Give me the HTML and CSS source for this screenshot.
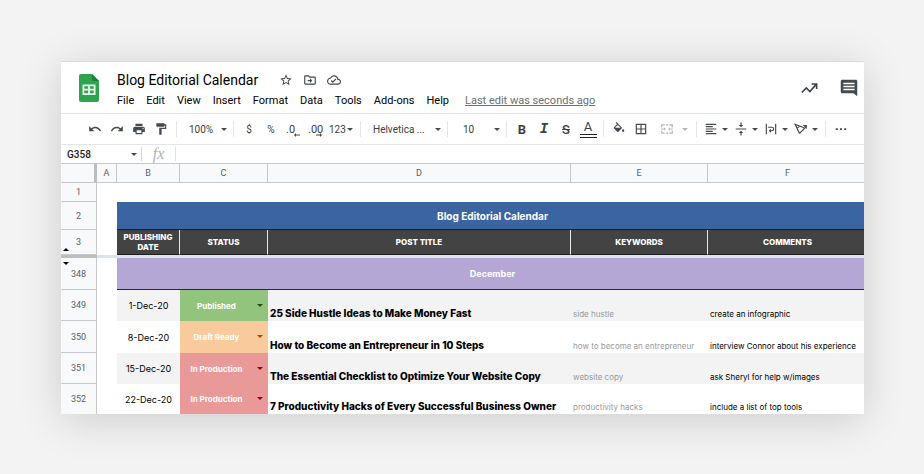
FILE: index.html
```
<!DOCTYPE html>
<html lang="en">
<head>
  <meta charset="UTF-8">
  <meta name="viewport" content="width=device-width, initial-scale=1.0">
  <title>Blog Editorial Calendar</title>
  <link rel="stylesheet" href="styles.css">
</head>
<body>
  <div class="window">
    <header class="header">
      <svg class="logo" viewBox="0 0 20 28">
        <path fill="#2ea44f" d="M2 0h11l7 7v19a2 2 0 0 1-2 2H2a2 2 0 0 1-2-2V2a2 2 0 0 1 2-2z"/>
        <path fill="#1d8040" d="M13 0l7 7h-7z"/>
        <path fill="#e9f7ec" fill-rule="evenodd" d="M3.500 10.500h13V21h-13zM5.300 12.200v2.600h3.800v-2.600zM10.900 12.200v2.600h3.800v-2.600zM5.300 16.600v2.600h3.800v-2.600zM10.900 16.600v2.600h3.800v-2.600z"/>
      </svg>
      <div class="doc">
        <div class="title-row">
          <h1>Blog Editorial Calendar</h1>
          <button class="icon-btn" aria-label="Star"><svg viewBox="0 0 24 24"><path d="M22 9.240l-7.190-.620L12 2 9.190 8.630 2 9.240l5.460 4.730L5.820 21 12 17.270 18.180 21l-1.630-7.030L22 9.240zM12 15.400l-3.760 2.270 1-4.280-3.320-2.880 4.380-.380L12 6.100l1.710 4.040 4.380.380-3.320 2.880 1 4.280L12 15.400z"/></svg></button>
          <button class="icon-btn" aria-label="Move"><svg viewBox="0 0 24 24"><path d="M20 6h-8l-2-2H4c-1.100 0-2 .9-2 2v12c0 1.100.9 2 2 2h16c1.100 0 2-.9 2-2V8c0-1.100-.9-2-2-2zm0 12H4V6h5.170l2 2H20v10z"/><path d="M12 9l4 4-4 4v-3H8v-2h4z"/></svg></button>
          <button class="icon-btn" aria-label="Saved"><svg viewBox="0 0 24 24"><path d="M19.350 10.040C18.670 6.590 15.640 4 12 4 9.110 4 6.610 5.640 5.360 8.040 2.350 8.360 0 10.910 0 14c0 3.310 2.690 6 6 6h13c2.760 0 5-2.240 5-5 0-2.640-2.050-4.780-4.650-4.960zM19 18H6c-2.210 0-4-1.790-4-4 0-2.050 1.530-3.760 3.560-3.970l1.070-.110.5-.950C8.080 7.140 9.940 6 12 6c2.620 0 4.880 1.860 5.390 4.430l.3 1.500 1.530.110c1.560.100 2.780 1.410 2.780 2.960 0 1.650-1.350 3-3 3zm-9-3.820l-2.090-2.090L6.500 13.500 10 17l6.010-6.010-1.410-1.410z"/></svg></button>
        </div>
        <nav class="menu">
          <button>File</button>
          <button>Edit</button>
          <button>View</button>
          <button>Insert</button>
          <button>Format</button>
          <button>Data</button>
          <button>Tools</button>
          <button>Add-ons</button>
          <button>Help</button>
          <a href="#">Last edit was seconds ago</a>
        </nav>
      </div>
      <div class="header-right">
        <button aria-label="Activity"><svg viewBox="0 0 20 20"><path fill="none" stroke="#3c4347" stroke-width="1.800" d="M2 15l5-5 4 4 7-8M13 5.500h5.500V11"/></svg></button>
        <button aria-label="Comments"><svg viewBox="0 0 24 24"><path d="M23 3c0-1.100-.9-2-2-2H3c-1.100 0-2 .9-2 2v14c0 1.100.9 2 2 2h15l5 4zM19.500 15h-15v-2h15zM19.500 11h-15V9h15zM19.500 7h-15V5h15z"/></svg></button>
      </div>
    </header>

    <div class="toolbar">
      <button aria-label="Undo"><svg viewBox="0 0 24 24"><path d="M12.500 8c-2.650 0-5.050.990-6.900 2.600L2 7v9h9l-3.620-3.620c1.390-1.160 3.160-1.880 5.120-1.880 3.540 0 6.550 2.310 7.600 5.500l2.370-.780C21.080 11.030 17.150 8 12.500 8z"/></svg></button>
      <button aria-label="Redo"><svg viewBox="0 0 24 24"><path d="M18.400 10.600C16.550 8.990 14.150 8 11.500 8c-4.650 0-8.580 3.030-9.960 7.220L3.900 16c1.050-3.190 4.050-5.500 7.600-5.500 1.950 0 3.730.720 5.120 1.880L13 16h9V7l-3.600 3.600z"/></svg></button>
      <button aria-label="Print"><svg viewBox="0 0 24 24"><path d="M19 8H5c-1.660 0-3 1.340-3 3v6h4v4h12v-4h4v-6c0-1.660-1.340-3-3-3zm-3 11H8v-5h8v5zm3-7c-.550 0-1-.450-1-1s.450-1 1-1 1 .450 1 1-.450 1-1 1zm-1-9H6v4h12V3z"/></svg></button>
      <button aria-label="Paint format"><svg viewBox="0 0 24 24"><path d="M18 4V3c0-.550-.450-1-1-1H5c-.550 0-1 .450-1 1v4c0 .550.450 1 1 1h12c.550 0 1-.450 1-1V6h1v4H9v11c0 .550.450 1 1 1h2c.550 0 1-.450 1-1v-9h8V4h-3z"/></svg></button>
      <span class="sep"></span>
      <span class="drop zoom"><select aria-label="Zoom"><option>100%</option><option>75%</option></select></span>
      <span class="sep"></span>
      <button>$</button>
      <button>%</button>
      <button class="decimal" aria-label="Decrease decimal places">.0<svg viewBox="0 0 6 4"><path d="M0 2l2-2v1.400h4v1.200H2V4z"/></svg></button>
      <button class="decimal" aria-label="Increase decimal places">.00<svg viewBox="0 0 6 4"><path d="M6 2L4 0v1.400H0v1.200h4V4z"/></svg></button>
      <button class="split">123<i class="caret"></i></button>
      <span class="sep"></span>
      <span class="drop font"><select aria-label="Font"><option>Helvetica ...</option><option>Arial</option></select></span>
      <span class="sep"></span>
      <span class="drop size"><select aria-label="Font size"><option>10</option><option>11</option></select></span>
      <span class="sep"></span>
      <button class="bold">B</button>
      <button class="italic">I</button>
      <button class="strike">S</button>
      <button class="color"><span>A</span></button>
      <span class="sep"></span>
      <button aria-label="Fill color"><svg viewBox="0 0 24 24"><path d="M16.560 8.940L7.620 0 6.210 1.410l2.380 2.380-5.150 5.150c-.590.590-.590 1.540 0 2.120l5.500 5.500c.290.290.680.440 1.060.440s.770-.150 1.060-.440l5.500-5.500c.590-.580.590-1.530 0-2.120zM5.210 10L10 5.210 14.790 10H5.210zM19 11.500s-2 2.170-2 3.500c0 1.100.9 2 2 2s2-.9 2-2c0-1.330-2-3.500-2-3.500z"/></svg></button>
      <button aria-label="Borders"><svg viewBox="0 0 24 24"><path d="M3 3v18h18V3H3zm8 16H5v-6h6v6zm0-8H5V5h6v6zm8 8h-6v-6h6v6zm0-8h-6V5h6v6z"/></svg></button>
      <button class="split merge" aria-label="Merge cells" disabled><svg viewBox="0 0 24 24"><path d="M2 4h6v2H4v3H2zM10 4h4v2h-4zM16 4h6v5h-2V6h-4zM2 15h2v3h4v2H2zM10 18h4v2h-4zM20 15h2v5h-6v-2h4zM2 11h5V9l3 3-3 3v-2H2zM22 11h-5V9l-3 3 3 3v-2h5z"/></svg><i class="caret"></i></button>
      <span class="sep"></span>
      <button class="split" aria-label="Horizontal align"><svg viewBox="0 0 24 24"><path d="M15 15H3v2h12v-2zm0-8H3v2h12V7zM3 13h18v-2H3v2zm0 8h18v-2H3v2zM3 3v2h18V3H3z"/></svg><i class="caret"></i></button>
      <button class="split" aria-label="Vertical align"><svg viewBox="0 0 24 24"><path d="M8 19h3v4h2v-4h3l-4-4-4 4zm8-14h-3V1h-2v4H8l4 4 4-4zM3 11v2h18v-2H3z"/></svg><i class="caret"></i></button>
      <button class="split" aria-label="Text wrapping"><svg viewBox="0 0 24 24"><path d="M3 3h2v18H3zM19 3h2v18h-2zM7 8h6.500a4 4 0 0 1 0 8H12v2.500L8 15l4-3.500V14h1.500a2 2 0 0 0 0-4H7z"/></svg><i class="caret"></i></button>
      <button class="split" aria-label="Text rotation"><svg viewBox="0 0 24 24"><path fill="none" stroke="#444a4f" stroke-width="2" d="M9 19L2 4l15 6M5 11l5-4M9 20L20 9"/><path d="M22 5v7l-7-7z"/></svg><i class="caret"></i></button>
      <span class="sep"></span>
      <button aria-label="More"><svg viewBox="0 0 24 24"><path d="M3 10.500h3.500v3H3zM10.200 10.500h3.500v3h-3.500zM17.500 10.500H21v3h-3.500z"/></svg></button>
    </div>

    <div class="formula-bar">
      <span class="drop name"><input type="text" value="G358" aria-label="Name box"></span>
      <label class="fx" for="formula">fx</label>
      <input type="text" id="formula" class="formula">
    </div>

    <table class="sheet">
      <colgroup>
        <col class="col-num">
        <col class="col-a">
        <col class="col-b">
        <col class="col-c">
        <col class="col-d">
        <col class="col-e">
        <col class="col-f">
      </colgroup>
      <thead>
        <tr class="letters">
          <th class="corner"></th>
          <th>A</th>
          <th>B</th>
          <th>C</th>
          <th>D</th>
          <th>E</th>
          <th>F</th>
        </tr>
      </thead>
      <tbody>
        <tr class="row-blank">
          <th>1</th>
          <td colspan="6"></td>
        </tr>
        <tr class="row-title">
          <th>2</th>
          <td></td>
          <td class="banner" colspan="5">Blog Editorial Calendar</td>
        </tr>
        <tr class="row-labels">
          <th class="arrow-up">3</th>
          <td></td>
          <td class="label">PUBLISHING DATE</td>
          <td class="label">STATUS</td>
          <td class="label">POST TITLE</td>
          <td class="label">KEYWORDS</td>
          <td class="label">COMMENTS</td>
        </tr>
        <tr class="freeze">
          <th></th>
          <td colspan="6"></td>
        </tr>
        <tr class="row-month">
          <th class="arrow-down">348</th>
          <td></td>
          <td class="month" colspan="5">December</td>
        </tr>
        <tr class="post shaded">
          <th>349</th>
          <td></td>
          <td class="date">1-Dec-20</td>
          <td class="status published"><select aria-label="Status"><option>Published</option><option>Draft Ready</option><option>In Production</option></select></td>
          <td class="post-title">25 Side Hustle Ideas to Make Money Fast</td>
          <td class="keywords">side hustle</td>
          <td class="comment">create an infographic</td>
        </tr>
        <tr class="post tall">
          <th>350</th>
          <td></td>
          <td class="date">8-Dec-20</td>
          <td class="status draft"><select aria-label="Status"><option>Draft Ready</option><option>Published</option><option>In Production</option></select></td>
          <td class="post-title">How to Become an Entrepreneur in 10 Steps</td>
          <td class="keywords">how to become an entrepreneur</td>
          <td class="comment">interview Connor about his experience</td>
        </tr>
        <tr class="post shaded">
          <th>351</th>
          <td></td>
          <td class="date">15-Dec-20</td>
          <td class="status production"><select aria-label="Status"><option>In Production</option><option>Published</option><option>Draft Ready</option></select></td>
          <td class="post-title">The Essential Checklist to Optimize Your Website Copy</td>
          <td class="keywords">website copy</td>
          <td class="comment">ask Sheryl for help w/images</td>
        </tr>
        <tr class="post last">
          <th>352</th>
          <td></td>
          <td class="date">22-Dec-20</td>
          <td class="status production"><select aria-label="Status"><option>In Production</option><option>Published</option><option>Draft Ready</option></select></td>
          <td class="post-title">7 Productivity Hacks of Every Successful Business Owner</td>
          <td class="keywords">productivity hacks</td>
          <td class="comment">include a list of top tools</td>
        </tr>
      </tbody>
    </table>
  </div>
</body>
</html>
```
FILE: styles.css
```
* {
  box-sizing: border-box;
}

body {
  margin: 0;
  padding: 61px 60px 60px 61px;
  background-color: #f3f3f3;
  font-family: Roboto, "Liberation Sans", sans-serif;
  color: #202124;
}

button,
select,
input {
  margin: 0;
  padding: 0;
  border: none;
  outline: none;
  border-radius: 0;
  background: none;
  color: inherit;
  font: inherit;
  appearance: none;
}

svg {
  display: block;
  fill: #444a4f;
}

.window {
  overflow: hidden;
  background-color: #fff;
  border-top: 1px solid #d9d8f7;
  box-shadow: 0 6px 40px rgba(0, 0, 0, 0.16);
}

/* Header */
.header {
  display: flex;
  height: 52px;
  padding: 8px 6px 0 18px;
  border-bottom: 1px solid #e4e5e7;
}

.logo {
  width: 20px;
  height: 28px;
  margin: 4px 18px 0 0;
}

.doc {
  flex: 1;
}

.title-row {
  display: flex;
  align-items: center;
  height: 20px;
}

h1 {
  margin: 0 21px 0 0;
  color: #000;
  font-size: 14px;
  font-weight: normal;
  line-height: 20px;
}

.icon-btn {
  margin-right: 10px;
}

.icon-btn svg {
  width: 14px;
  height: 14px;
}

.menu {
  display: flex;
  gap: 12px;
  color: #000;
  font-size: 11px;
  line-height: 22px;
}

.menu a {
  margin-left: 4px;
  color: #6b6f73;
}

.header-right {
  display: flex;
  align-items: center;
  gap: 22px;
  height: 36px;
}

.header-right svg {
  width: 18px;
  height: 18px;
}

/* Toolbar */
.toolbar {
  display: flex;
  align-items: center;
  height: 31px;
  padding-left: 23px;
  border-bottom: 1px solid #e4e5e7;
  color: #3c4043;
  font-size: 10px;
}

.toolbar button {
  display: flex;
  flex: none;
  align-items: center;
  justify-content: center;
  width: 22px;
  height: 22px;
}

.toolbar button svg {
  width: 14px;
  height: 14px;
}

.toolbar .sep {
  flex: none;
  width: 1px;
  height: 16px;
  margin: 0 4px;
  background-color: #e4e5e7;
}

.toolbar .split {
  justify-content: space-between;
  width: 30px;
  padding: 0 3px;
}

.toolbar .merge {
  width: 40px;
  padding: 0 4px 0 8px;
  opacity: 0.4;
}

.caret {
  border: 3px solid transparent;
  border-top-color: #444a4f;
  border-bottom: none;
}

.drop {
  position: relative;
  flex: none;
}

.drop select {
  width: 100%;
  padding-left: 8px;
}

.drop::after {
  content: "";
  position: absolute;
  top: 50%;
  right: 2px;
  margin-top: -1px;
  border: 3px solid transparent;
  border-top-color: #444a4f;
  border-bottom: none;
  pointer-events: none;
}

.zoom {
  width: 48px;
}

.font {
  width: 78px;
}

.size {
  width: 50px;
}

.size select {
  padding-left: 11px;
}

.toolbar .decimal {
  position: relative;
  justify-content: flex-start;
  padding-left: 4px;
  font-size: 11px;
}

.toolbar .decimal svg {
  position: absolute;
  right: 4px;
  bottom: 3px;
  width: 6px;
  height: 4px;
}

.toolbar .bold {
  font-size: 13px;
  font-weight: bold;
}

.toolbar .italic {
  font-family: "Liberation Mono", monospace;
  font-size: 14px;
  font-style: italic;
  font-weight: bold;
}

.toolbar .strike {
  font-size: 13px;
  font-weight: 500;
  text-decoration: line-through;
}

.toolbar .color span {
  width: 17px;
  border-bottom: 4px double #202124;
  font-size: 13px;
  line-height: 14px;
}

/* Formula bar */
.formula-bar {
  display: flex;
  align-items: center;
  height: 18px;
}

.name {
  display: flex;
  width: 81px;
  border-right: 1px solid #d5d7d9;
}

.name::after {
  right: 4px;
}

.name input {
  width: 100%;
  height: 14px;
  padding-left: 6px;
  font-size: 10px;
  font-weight: 500;
}

.fx {
  width: 34px;
  border-right: 1px solid #e0e1e3;
  color: #b0b2b5;
  font-family: "Liberation Serif", serif;
  font-size: 16px;
  font-style: italic;
  line-height: 14px;
  text-align: center;
}

.formula {
  flex: 1;
  min-width: 0;
  padding-left: 6px;
  font-size: 10px;
}

/* Sheet: the last column runs past the window edge */
.sheet {
  width: calc(100% + 4px);
  table-layout: fixed;
  border-spacing: 0;
  font-family: Inter, "Liberation Sans", sans-serif;
}

.col-num {
  width: 36px;
}

.col-a {
  width: 20px;
}

.col-b {
  width: 63px;
}

.col-c {
  width: 88px;
}

.col-e {
  width: 137px;
}

.col-f {
  width: 160px;
}

.sheet th,
.sheet td {
  padding: 0;
}

.sheet th {
  position: relative;
  background-color: #f8f9fb;
  border-right: 1px solid #c6c8ca;
  border-bottom: 1px solid #c6c8ca;
  color: #5c6064;
  font-family: Roboto, sans-serif;
  font-size: 9px;
  font-weight: normal;
}

.letters {
  height: 20px;
}

.letters th {
  border-top: 1px solid #c6c8ca;
}

.letters .corner {
  border-right: 3px solid #bdbdbd;
}

.row-blank {
  height: 19px;
}

.row-title {
  height: 28px;
}

.row-labels {
  height: 25px;
}

.row-month {
  height: 32px;
}

.sheet .banner {
  background-color: #3a64a2;
  border-bottom: 1px solid #1c1c1c;
  color: #fff;
  font-size: 10px;
  font-weight: bold;
  text-align: center;
}

.sheet .label {
  background-color: #434343;
  border-right: 1px solid #e8e8e8;
  border-bottom: 1px solid #1c1c1c;
  color: #fff;
  font-size: 8px;
  font-weight: 800;
  line-height: 10px;
  text-align: center;
}

.freeze {
  height: 3px;
}

.freeze th {
  border: none;
  background-color: #bdbdbd;
}

.freeze td {
  background-color: #dce2ee;
}

/* Markers for the hidden rows */
.arrow-up::before,
.arrow-down::before {
  content: "";
  position: absolute;
  left: 2px;
  border: 3px solid transparent;
}

.arrow-up::before {
  bottom: 3px;
  border-top: none;
  border-bottom-color: #000;
}

.arrow-down::before {
  top: 4px;
  border-bottom: none;
  border-top-color: #000;
}

.sheet .month {
  background-color: #b4a7d6;
  border-bottom: 1px solid #2b2640;
  color: #fff;
  font-size: 9px;
  font-weight: bold;
  text-align: center;
}

.post {
  height: 31px;
}

.post.tall {
  height: 32px;
}

.post.last {
  height: 30px;
}

.last th {
  border-bottom: none;
}

.shaded .date,
.shaded .post-title,
.shaded .keywords,
.shaded .comment {
  background-color: #f3f3f3;
}

.date {
  color: #000;
  font-size: 9px;
  text-align: center;
}

.status {
  position: relative;
  color: #fff;
}

.status select {
  display: block;
  width: 100%;
  padding-right: 15px;
  font-size: 8px;
  font-weight: bold;
  text-align-last: center;
}

.status::after {
  content: "";
  position: absolute;
  top: 50%;
  right: 5px;
  margin-top: -2px;
  border: 3px solid transparent;
  border-bottom: none;
  pointer-events: none;
}

.published {
  background-color: #93c47d;
}

.published::after {
  border-top-color: #274e13;
}

.draft {
  background-color: #f9cb9c;
}

.draft::after {
  border-top-color: #a0500f;
}

.production {
  background-color: #ea9999;
}

.production::after {
  border-top-color: #990000;
}

.sheet .post-title,
.sheet .keywords,
.sheet .comment {
  padding: 0 2px 1px 2px;
  line-height: 12px;
  vertical-align: bottom;
  white-space: nowrap;
}

.sheet .post-title {
  padding-bottom: 2px;
  color: #000;
  font-size: 10px;
  font-weight: 800;
}

.keywords {
  color: #999;
  font-size: 8px;
}

.comment {
  color: #000;
  font-size: 8px;
}
```
